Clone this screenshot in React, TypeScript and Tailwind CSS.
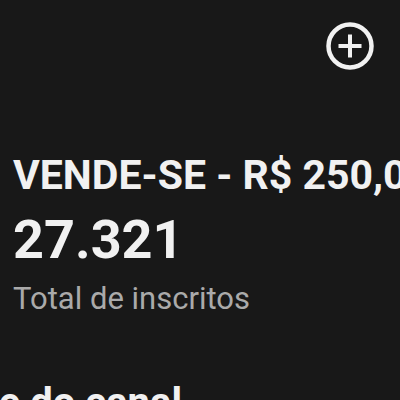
import React from 'react'

function PlusCircle() {
    return (
        <svg width="52" height="52" viewBox="0 0 52 52" fill="none" stroke="#f1f1f1">
            <circle cx="26" cy="26" r="21.5" strokeWidth="4.5" />
            <path d="M26 14.5v23M14.5 26h23" strokeWidth="4" />
        </svg>
    )
}

function App() {
    return (
        <div
            className="w-[400px] h-[400px] overflow-hidden bg-[#181818] text-[#f1f1f1]"
            style={{fontFamily: 'Roboto, "Noto Sans", sans-serif'}}
        >
            <div className="flex justify-end pt-[20px] pr-[24px] h-[155px]">
                <PlusCircle />
            </div>

            <div className="pl-[13px]">
                <h1 className="text-[41px] leading-none font-bold whitespace-nowrap">
                    VENDE-SE - R$ 250,00
                </h1>
                <p className="mt-[17px] text-[54px] leading-none font-bold">27.321</p>
                <p className="mt-[16px] text-[31px] leading-none text-[#aaaaaa]">Total de inscritos</p>
            </div>

            <h2 className="mt-[69px] -ml-[113px] text-[40px] leading-none font-bold whitespace-nowrap">
                Análise do canal
            </h2>
        </div>
    )
}

export default App
